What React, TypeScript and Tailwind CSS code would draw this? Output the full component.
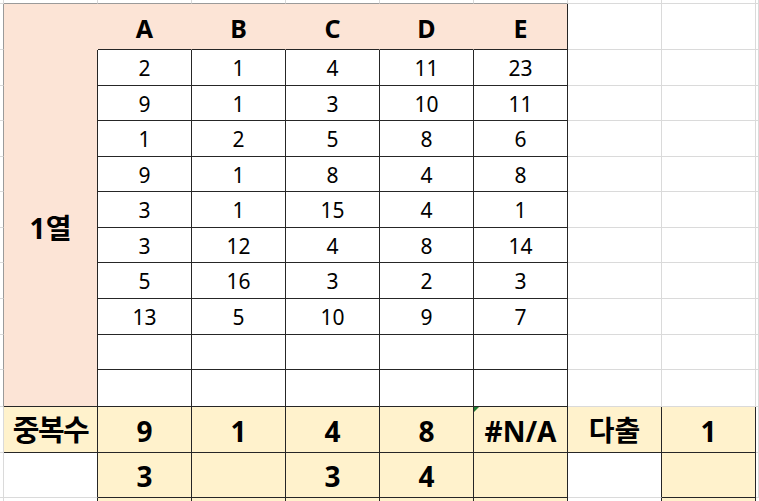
import React from 'react';

// 시트 격자: 열 0 = 왼쪽 여백, 1~8 = 본 열, 9 = 나머지
const heads = ['A', 'B', 'C', 'D', 'E'];
const rows = [
  ['2', '1', '4', '11', '23'],
  ['9', '1', '3', '10', '11'],
  ['1', '2', '5', '8', '6'],
  ['9', '1', '8', '4', '8'],
  ['3', '1', '15', '4', '1'],
  ['3', '12', '4', '8', '14'],
  ['5', '16', '3', '2', '3'],
  ['13', '5', '10', '9', '7'],
  ['', '', '', '', ''],
  ['', '', '', '', ''],
];
const dups = ['9', '1', '4', '8', '#N/A'];
const second = ['3', '', '3', '4', ''];

const grid = 'border-r border-b border-[#dadada]';
const dark = 'border-r border-b border-[#262626]';
const center = 'flex items-center justify-center';

export default function App() {
  return (
    <div className="h-[501px] w-[759px] overflow-hidden bg-white font-['Noto_Sans','Noto_Sans_CJK_KR',sans-serif] text-black">
      <div className="grid h-full grid-cols-[4px_repeat(8,94px)_1fr] grid-rows-[4px_46px_36px_35px_36px_35px_36px_35px_36px_36px_35px_37px_46px_45px_1fr]">
        {/* 맨 윗줄 */}
        <div className={grid} />
        {[0, 1, 2, 3, 4, 5].map((i) => (
          <div key={i} className="border-r border-b border-r-[#dadada] border-b-[#9a9a9a]" />
        ))}
        <div className={grid} />
        <div className={grid} />
        <div className={grid} />

        {/* 머리글 줄 */}
        <div className="border-r border-b border-r-[#9a9a9a] border-b-[#dadada]" />
        <div className="bg-[#fce4d6]" />
        {heads.map((h, i) => (
          <div
            key={h}
            className={`${center} bg-[#fce4d6] border-b border-b-[#262626] border-r ${i === 4 ? 'border-r-[#262626]' : 'border-r-[#fce4d6]'} pt-[5px] text-[25px] font-bold`}
          >
            {h}
          </div>
        ))}
        <div className={grid} />
        <div className={grid} />
        <div className={grid} />

        {/* 자료 줄 */}
        {rows.map((r, ri) => (
          <React.Fragment key={ri}>
            <div className="border-r border-b border-r-[#9a9a9a] border-b-[#dadada]" />
            {ri === 0 && (
              <div className={`${center} row-span-10 bg-[#fce4d6] ${dark} text-[28px] font-bold`}>
                1열
              </div>
            )}
            {r.map((v, ci) => (
              <div key={ci} className={`${center} ${dark} bg-white pt-[3px] text-[21px]`}>
                {v}
              </div>
            ))}
            <div className={grid} />
            <div className={grid} />
            <div className={grid} />
          </React.Fragment>
        ))}

        {/* 중복수 */}
        <div className={grid} />
        <div className={`${center} ${dark} bg-[#fff2cc] text-[29px] font-bold tracking-[-1.5px]`}>중복수</div>
        {dups.map((v, i) => (
          <div key={i} className={`relative ${center} ${dark} bg-[#fff2cc] pt-[2px] text-[28px] font-bold`}>
            {i === 4 && (
              <span className="absolute left-0 top-0 h-0 w-0 border-t-[5px] border-r-[5px] border-t-[#1e7b34] border-r-transparent" />
            )}
            {v}
          </div>
        ))}
        <div className={`${center} ${dark} bg-[#fff2cc] text-[28px] font-bold`}>다출</div>
        <div className={`${center} ${dark} bg-[#fff2cc] pt-[2px] text-[28px] font-bold`}>1</div>
        <div className={grid} />

        {/* 둘째 줄 */}
        <div className={grid} />
        <div className="border-r border-b border-r-[#262626] border-b-[#dadada]" />
        {second.map((v, i) => (
          <div key={i} className={`${center} ${dark} bg-[#fff2cc] pt-[2px] text-[28px] font-bold`}>
            {v}
          </div>
        ))}
        <div className="border-r border-b border-r-[#262626] border-b-[#dadada]" />
        <div className={`${dark} bg-[#fff2cc]`} />
        <div className={grid} />

        {/* 잘린 줄 */}
        <div className="border-r border-[#dadada]" />
        <div className="border-r border-[#262626]" />
        {[0, 1, 2, 3, 4].map((i) => (
          <div key={i} className="border-r border-[#262626] bg-[#fff2cc]" />
        ))}
        <div className="border-r border-[#262626]" />
        <div className="border-r border-[#262626] bg-[#fff2cc]" />
        <div />
      </div>
    </div>
  );
}
